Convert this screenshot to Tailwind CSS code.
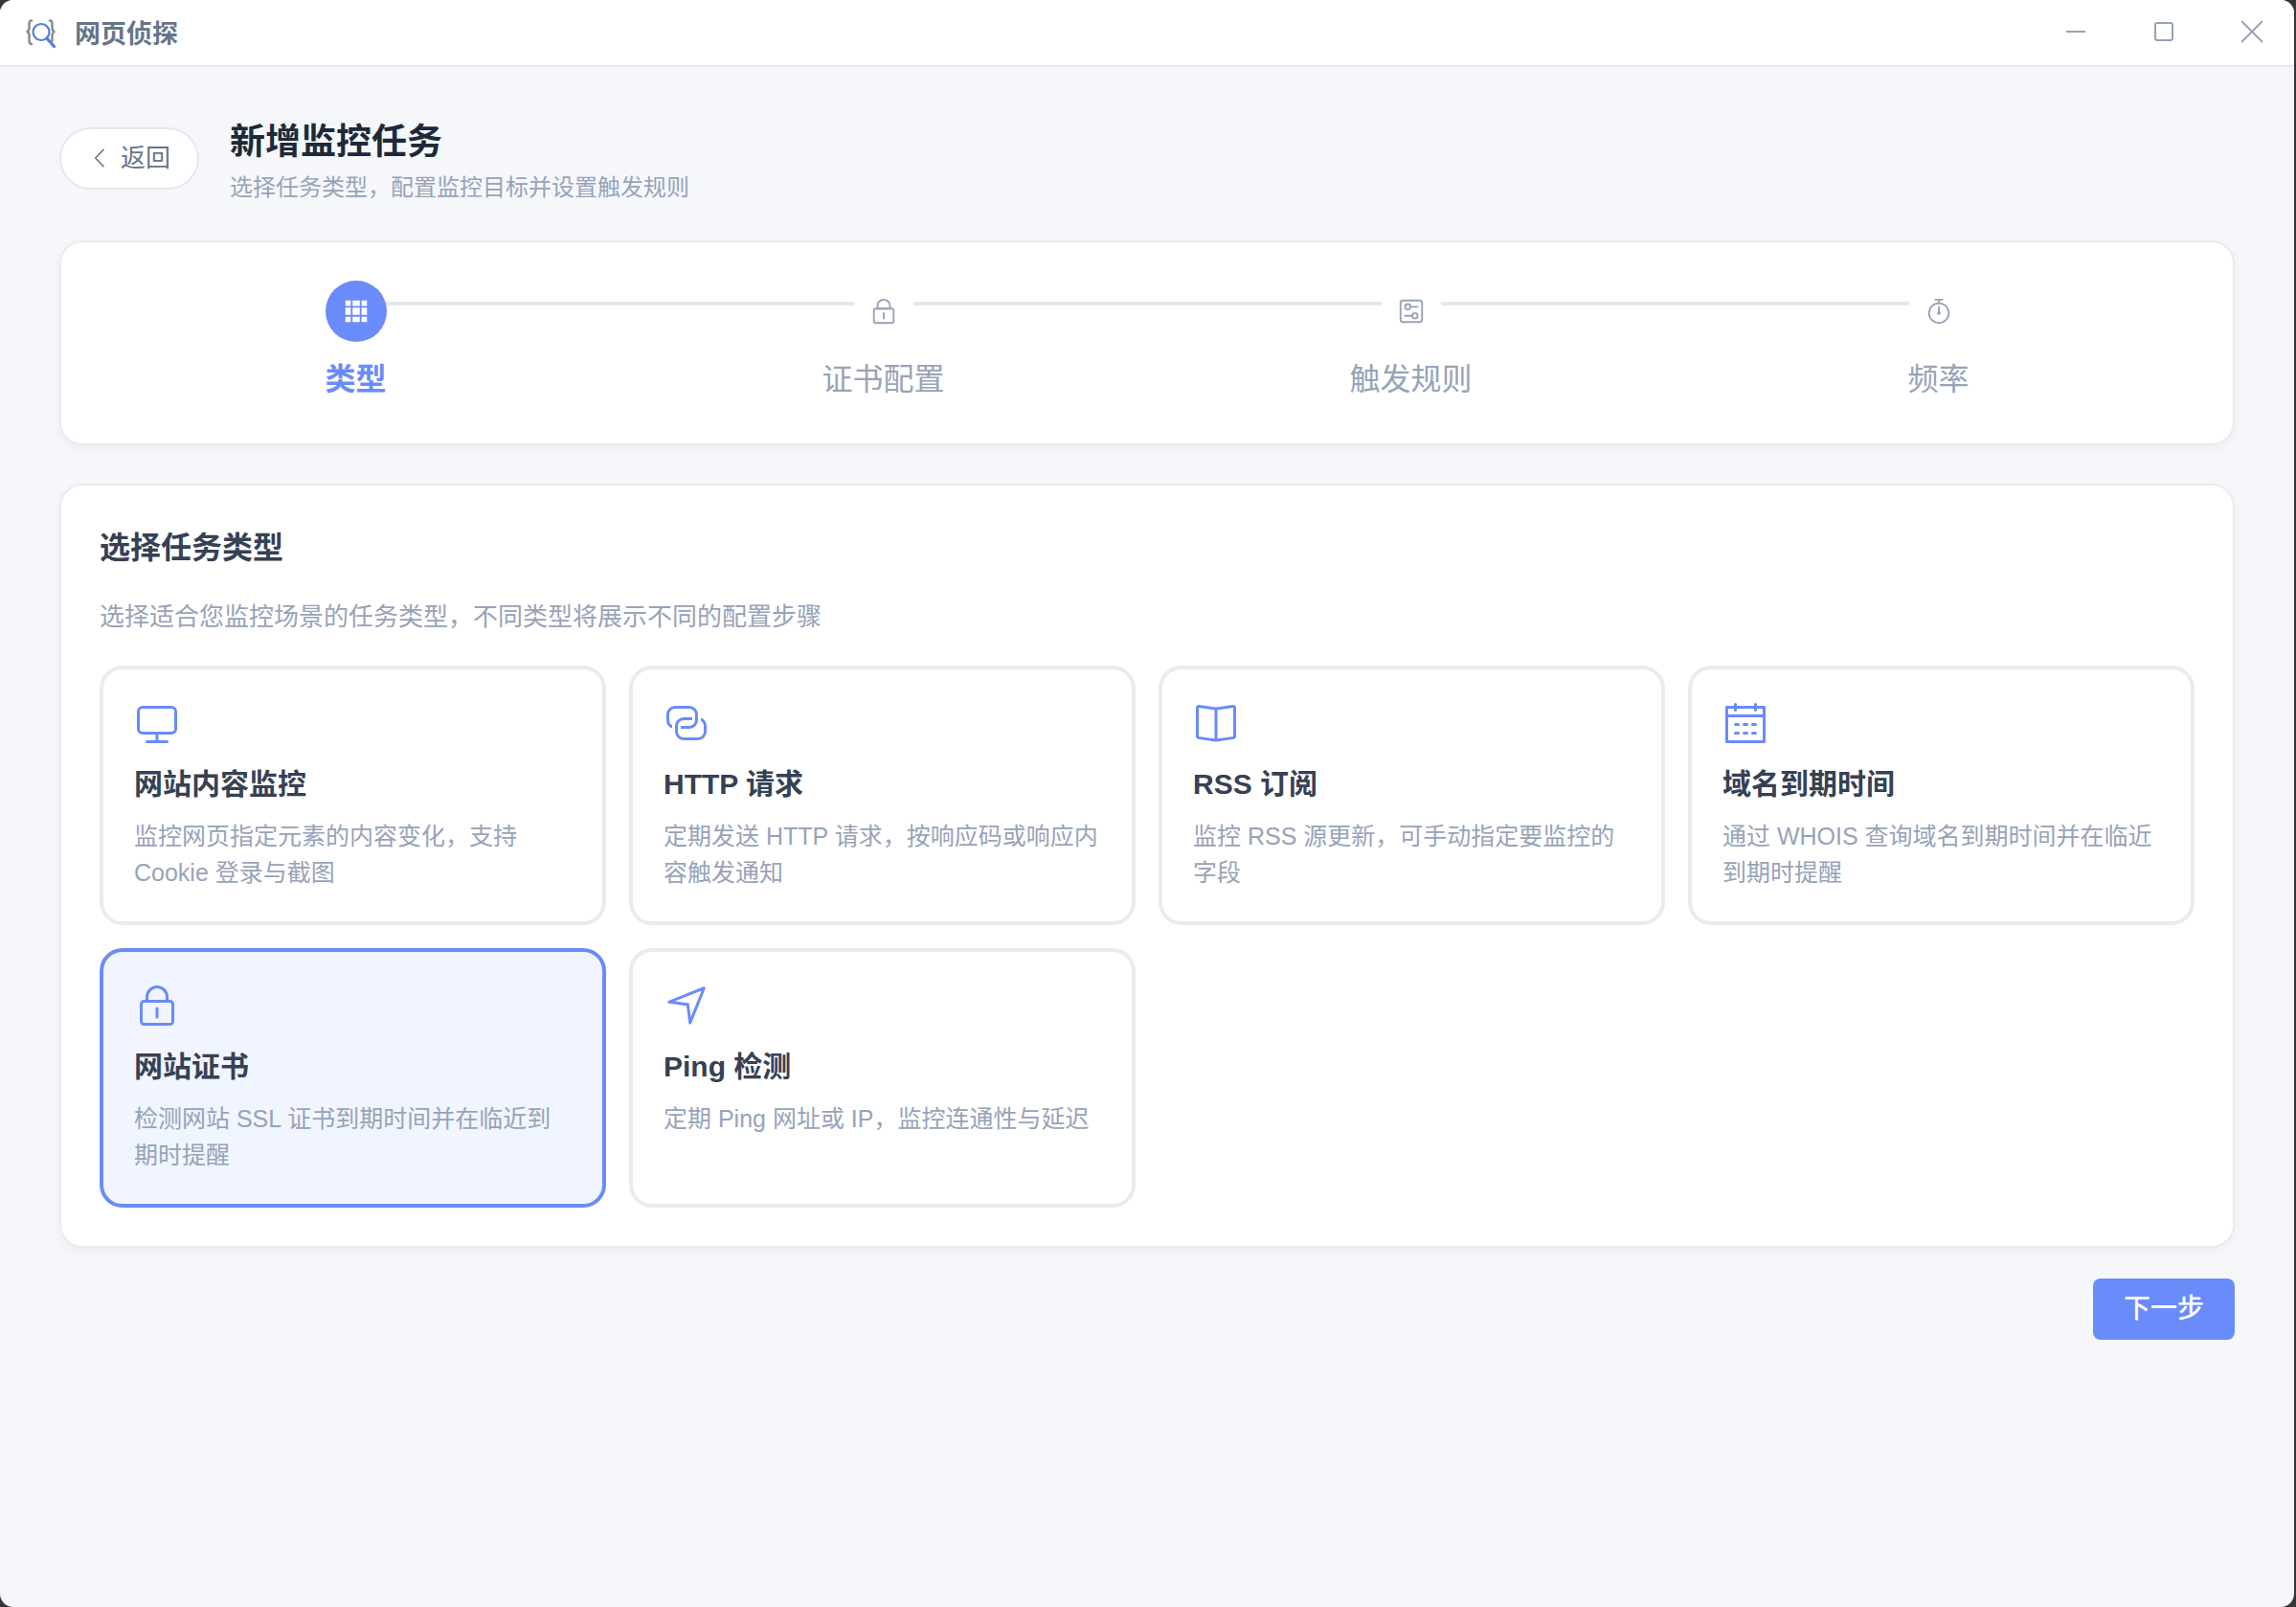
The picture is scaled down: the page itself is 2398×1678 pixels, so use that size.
<!DOCTYPE html>
<html lang="zh-CN">
<head>
<meta charset="utf-8">
<meta name="viewport" content="width=device-width, initial-scale=1">
<title>网页侦探</title>
<script src="https://cdn.jsdelivr.net/npm/@tailwindcss/browser@4"></script>
</head>
<body class="bg-[#353537] pr-[2px] font-['Liberation_Sans','Noto_Sans_CJK_SC',sans-serif] text-[#364153]">
<svg class="hidden" aria-hidden="true">
  <symbol id="lock" viewBox="0 0 1024 1024"><path d="M224 448a32 32 0 0 0-32 32v384a32 32 0 0 0 32 32h576a32 32 0 0 0 32-32V480a32 32 0 0 0-32-32zm0-64h576a96 96 0 0 1 96 96v384a96 96 0 0 1-96 96H224a96 96 0 0 1-96-96V480a96 96 0 0 1 96-96"/><path d="M512 544a32 32 0 0 1 32 32v192a32 32 0 1 1-64 0V576a32 32 0 0 1 32-32m192-160v-64a192 192 0 1 0-384 0v64zM512 64a256 256 0 0 1 256 256v128H256V320A256 256 0 0 1 512 64"/></symbol>
</svg>
<div class="flex min-h-screen flex-col overflow-hidden rounded-[14px] bg-[#f5f7fb]">
  <header class="flex h-[70px] items-center justify-between border-b-2 border-[#e6eaf0] bg-white">
    <div class="flex items-center gap-[18px] pt-[3px] pl-[26px]">
      <svg class="h-8 w-[34px]" viewBox="0 1 34 32" fill="none" stroke-linecap="round" aria-hidden="true">
        <path d="M7 2.500C4.800 2.500 4.500 4 4.500 6v4c0 2.500-.500 4-3 4 2.500 0 3 1.500 3 4v5c0 2 .300 4 2.500 4M26 2.500c2.200 0 2.500 1.500 2.500 3.500v4c0 2.500.500 4 3 4-2.500 0-3 1.500-3 4v4c0 1 0 2-.500 2.500" stroke="#8a8d92" stroke-width="2.500"/>
        <circle cx="17" cy="14.500" r="8.500" stroke="#4f7fd6" stroke-width="2.200"/>
        <path d="M23 21l7.500 8.500" stroke="#4f7fd6" stroke-width="3.200"/>
      </svg>
      <span class="text-[27px] leading-9 font-bold text-[#677489]">网页侦探</span>
    </div>
    <div class="flex gap-1 self-stretch">
      <button type="button" aria-label="最小化" class="flex w-[88px] items-center justify-center"><svg class="size-6" viewBox="0 0 24 24" stroke="#97a3b8" stroke-width="2"><path d="M2 11h20"/></svg></button>
      <button type="button" aria-label="最大化" class="flex w-[88px] items-center justify-center"><svg class="size-6" viewBox="0 0 24 24" fill="none" stroke="#97a3b8" stroke-width="2"><rect x="3" y="2" width="18" height="18" rx="2"/></svg></button>
      <button type="button" aria-label="关闭" class="flex w-[88px] items-center justify-center"><svg class="size-6" viewBox="0 0 24 24" stroke="#97a3b8" stroke-width="2"><path d="M1 0l22 22M23 0L1 22"/></svg></button>
    </div>
  </header>

  <main class="flex flex-col px-[62px] pt-12 pb-12">
    <div class="flex items-center gap-8">
      <button type="button" class="flex h-[65px] items-center gap-2 rounded-full border-2 border-[#e4e8f0] bg-white px-7 text-[26px] text-[#677489]">
        <svg class="size-[26px]" viewBox="0 0 1024 1024" fill="currentColor" aria-hidden="true"><path d="M609.408 149.376 277.760 489.600a32 32 0 0 0 0 44.672l331.648 340.352a29.120 29.120 0 0 0 41.728 0 30.590 30.590 0 0 0 0-42.752L339.264 511.936l311.872-319.872a30.590 30.590 0 0 0 0-42.688 29.120 29.120 0 0 0-41.728 0"/></svg>
        返回
      </button>
      <div>
        <h1 class="text-[37px] leading-[62px] font-bold text-[#1e2939]">新增监控任务</h1>
        <p class="text-[24px] leading-8 text-[#97a3b8]">选择任务类型，配置监控目标并设置触发规则</p>
      </div>
    </div>

    <section class="mt-[39px] rounded-3xl border-2 border-[#e8ecf1] bg-white px-8 py-10 shadow-[0_4px_12px_rgba(0,0,0,0.04)]">
      <ol class="flex text-[32px] leading-[54px] text-[#97a3b8]">
        <li class="relative flex flex-1 flex-col items-center gap-3" aria-current="step">
          <span class="absolute top-[22px] left-1/2 h-1 w-full bg-[#e3e8f0]"></span>
          <span class="relative flex size-16 items-center justify-center rounded-full bg-[#6a8bfa] text-white"><svg class="size-[30px]" viewBox="0 0 1024 1024" fill="currentColor" aria-hidden="true"><path d="M640 384v256H384V384zm64 0h192v256H704zm-64 512H384V704h256zm64 0V704h192v192zm-64-768v192H384V128zm64 0h192v192H704zM320 384v256H128V384zm0 512H128V704h192zm0-768v192H128V128z"/></svg></span>
          <span class="font-bold text-[#6a8bfa]">类型</span>
        </li>
        <li class="relative flex flex-1 flex-col items-center gap-3">
          <span class="absolute top-[22px] left-1/2 h-1 w-full bg-[#e3e8f0]"></span>
          <span class="relative z-10 flex size-16 items-center justify-center rounded-full bg-white"><svg class="size-[30px]" fill="currentColor" aria-hidden="true"><use href="#lock"/></svg></span>
          <span>证书配置</span>
        </li>
        <li class="relative flex flex-1 flex-col items-center gap-3">
          <span class="absolute top-[22px] left-1/2 h-1 w-full bg-[#e3e8f0]"></span>
          <span class="relative z-10 flex size-16 items-center justify-center rounded-full bg-white"><svg class="size-[30px]" viewBox="0 0 1024 1024" fill="currentColor" aria-hidden="true"><path d="M224 160a64 64 0 0 0-64 64v576a64 64 0 0 0 64 64h576a64 64 0 0 0 64-64V224a64 64 0 0 0-64-64zm0-64h576a128 128 0 0 1 128 128v576a128 128 0 0 1-128 128H224A128 128 0 0 1 96 800V224A128 128 0 0 1 224 96"/><path d="M384 416a64 64 0 1 0 0-128 64 64 0 0 0 0 128m0 64a128 128 0 1 1 0-256 128 128 0 0 1 0 256"/><path d="M480 320h256q32 0 32 32t-32 32H480q-32 0-32-32t32-32m160 416a64 64 0 1 0 0-128 64 64 0 0 0 0 128m0 64a128 128 0 1 1 0-256 128 128 0 0 1 0 256"/><path d="M288 640h256q32 0 32 32t-32 32H288q-32 0-32-32t32-32"/></svg></span>
          <span>触发规则</span>
        </li>
        <li class="relative flex flex-1 flex-col items-center gap-3">
          <span class="relative z-10 flex size-16 items-center justify-center rounded-full bg-white"><svg class="size-[30px]" viewBox="0 0 1024 1024" fill="currentColor" aria-hidden="true"><path d="M512 896a320 320 0 1 0 0-640 320 320 0 0 0 0 640m0 64a384 384 0 1 1 0-768 384 384 0 0 1 0 768"/><path d="M512 320a32 32 0 0 1 32 32l-.512 224a32 32 0 1 1-64 0L480 352a32 32 0 0 1 32-32"/><path d="M448 576a64 64 0 1 0 128 0 64 64 0 1 0-128 0m96-448v128h-64V128h-96a32 32 0 0 1 0-64h256a32 32 0 1 1 0 64z"/></svg></span>
          <span>频率</span>
        </li>
      </ol>
    </section>

    <section class="mt-10 rounded-3xl border-2 border-[#e8ecf1] bg-white p-10 shadow-[0_4px_12px_rgba(0,0,0,0.04)]">
      <h2 class="text-[32px] leading-[50px] font-bold">选择任务类型</h2>
      <p class="mt-7 mb-8 text-[26px] leading-[38px] text-[#97a3b8]">选择适合您监控场景的任务类型，不同类型将展示不同的配置步骤</p>
      <div class="grid grid-cols-4 gap-6">
        <button type="button" aria-pressed="false" class="flex flex-col items-start rounded-3xl border-4 border-[#e8ecf1] bg-white p-8 text-left">
          <svg class="size-12 text-[#6a8bfa]" viewBox="0 0 1024 1024" fill="currentColor" aria-hidden="true"><path d="M544 768v128h192a32 32 0 1 1 0 64H288a32 32 0 1 1 0-64h192V768H192A128 128 0 0 1 64 640V256a128 128 0 0 1 128-128h640a128 128 0 0 1 128 128v384a128 128 0 0 1-128 128zM192 192a64 64 0 0 0-64 64v384a64 64 0 0 0 64 64h640a64 64 0 0 0 64-64V256a64 64 0 0 0-64-64z"/></svg>
          <span class="mt-4 mb-3 text-[30px] leading-[47px] font-bold">网站内容监控</span>
          <span class="text-[25px] leading-[38px] text-[#97a3b8]">监控网页指定元素的内容变化，支持 Cookie 登录与截图</span>
        </button>
        <button type="button" aria-pressed="false" class="flex flex-col items-start rounded-3xl border-4 border-[#e8ecf1] bg-white p-8 text-left">
          <svg class="size-12 text-[#6a8bfa]" viewBox="0 0 1024 1024" fill="currentColor" aria-hidden="true"><path d="M640 384v64H448a128 128 0 0 0-128 128v128a128 128 0 0 0 128 128h320a128 128 0 0 0 128-128V576a128 128 0 0 0-64-110.848V394.880c74.560 26.368 128 97.472 128 181.056v128a192 192 0 0 1-192 192H448a192 192 0 0 1-192-192V576a192 192 0 0 1 192-192z"/><path d="M384 640v-64h192a128 128 0 0 0 128-128V320a128 128 0 0 0-128-128H256a128 128 0 0 0-128 128v128a128 128 0 0 0 64 110.848v70.272A192.064 192.064 0 0 1 64 448V320a192 192 0 0 1 192-192h320a192 192 0 0 1 192 192v128a192 192 0 0 1-192 192z"/></svg>
          <span class="mt-4 mb-3 text-[30px] leading-[47px] font-bold">HTTP 请求</span>
          <span class="text-[25px] leading-[38px] text-[#97a3b8]">定期发送 HTTP 请求，按响应码或响应内容触发通知</span>
        </button>
        <button type="button" aria-pressed="false" class="flex flex-col items-start rounded-3xl border-4 border-[#e8ecf1] bg-white p-8 text-left">
          <svg class="size-12 text-[#6a8bfa]" viewBox="0 0 1024 1024" fill="currentColor" aria-hidden="true"><path d="m512 863.360 384-54.848v-638.720L525.568 222.720a96 96 0 0 1-27.136 0L128 169.792v638.720zM137.024 106.432l370.432 52.928a32 32 0 0 0 9.088 0l370.432-52.928A64 64 0 0 1 960 169.792v638.720a64 64 0 0 1-54.976 63.360l-388.480 55.488a32 32 0 0 1-9.088 0l-388.480-55.488A64 64 0 0 1 64 808.512v-638.720a64 64 0 0 1 73.024-63.360"/><path d="M480 192h64v704h-64z"/></svg>
          <span class="mt-4 mb-3 text-[30px] leading-[47px] font-bold">RSS 订阅</span>
          <span class="text-[25px] leading-[38px] text-[#97a3b8]">监控 RSS 源更新，可手动指定要监控的字段</span>
        </button>
        <button type="button" aria-pressed="false" class="flex flex-col items-start rounded-3xl border-4 border-[#e8ecf1] bg-white p-8 text-left">
          <svg class="size-12 text-[#6a8bfa]" viewBox="0 0 1024 1024" fill="currentColor" aria-hidden="true"><path d="M128 384v512h768V192H768v32a32 32 0 1 1-64 0v-32H320v32a32 32 0 0 1-64 0v-32H128v128h768v64zm192-256h384V96a32 32 0 1 1 64 0v32h160a32 32 0 0 1 32 32v768a32 32 0 0 1-32 32H96a32 32 0 0 1-32-32V160a32 32 0 0 1 32-32h160V96a32 32 0 0 1 64 0zm-32 384h64a32 32 0 0 1 0 64h-64a32 32 0 0 1 0-64m0 192h64a32 32 0 1 1 0 64h-64a32 32 0 1 1 0-64m192-192h64a32 32 0 0 1 0 64h-64a32 32 0 0 1 0-64m0 192h64a32 32 0 1 1 0 64h-64a32 32 0 1 1 0-64m192-192h64a32 32 0 1 1 0 64h-64a32 32 0 1 1 0-64m0 192h64a32 32 0 1 1 0 64h-64a32 32 0 1 1 0-64"/></svg>
          <span class="mt-4 mb-3 text-[30px] leading-[47px] font-bold">域名到期时间</span>
          <span class="text-[25px] leading-[38px] text-[#97a3b8]">通过 WHOIS 查询域名到期时间并在临近到期时提醒</span>
        </button>
        <button type="button" aria-pressed="true" class="flex flex-col items-start rounded-3xl border-4 border-[#6a8bfa] bg-[#f0f5ff] p-8 text-left">
          <svg class="size-12 text-[#6a8bfa]" fill="currentColor" aria-hidden="true"><use href="#lock"/></svg>
          <span class="mt-4 mb-3 text-[30px] leading-[47px] font-bold">网站证书</span>
          <span class="text-[25px] leading-[38px] text-[#97a3b8]">检测网站 SSL 证书到期时间并在临近到期时提醒</span>
        </button>
        <button type="button" aria-pressed="false" class="flex flex-col items-start rounded-3xl border-4 border-[#e8ecf1] bg-white p-8 text-left">
          <svg class="size-12 text-[#6a8bfa]" viewBox="0 0 1024 1024" fill="currentColor" aria-hidden="true"><path d="m249.600 417.088 319.744 43.072 39.168 310.272L845.120 178.880zm-129.024 47.168a32 32 0 0 1-7.680-61.440l777.792-311.040a32 32 0 0 1 41.600 41.600l-310.336 775.680a32 32 0 0 1-61.440-7.808L512 516.992z"/></svg>
          <span class="mt-4 mb-3 text-[30px] leading-[47px] font-bold">Ping 检测</span>
          <span class="text-[25px] leading-[38px] text-[#97a3b8]">定期 Ping 网址或 IP，监控连通性与延迟</span>
        </button>
      </div>
    </section>

    <button type="button" class="mt-8 flex h-16 items-center self-end rounded-lg bg-[#6a8bfa] px-8 text-[28px] font-medium text-white">下一步</button>
  </main>
</div>
</body>
</html>
